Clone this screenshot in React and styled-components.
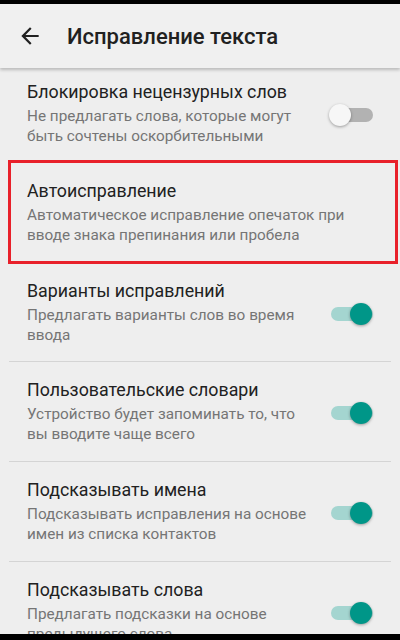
import React from 'react';
import styled, { createGlobalStyle } from 'styled-components';

const GlobalStyle = createGlobalStyle`
  html, body {
    margin: 0;
    padding: 0;
    background: #000;
  }
  * {
    box-sizing: border-box;
  }
`;

const Screen = styled.div`
  width: 400px;
  height: 640px;
  display: flex;
  flex-direction: column;
  background: #eeeeee;
  font-family: Roboto, "Noto Sans", sans-serif;
  overflow: hidden;
`;

const StatusStrip = styled.div`
  height: ${(p) => p.h}px;
  flex: none;
  background: #000;
`;

const Toolbar = styled.header`
  height: 64px;
  flex: none;
  display: flex;
  align-items: center;
  padding-left: 17px;
  background: #f0f0f0;
  box-shadow: 0 2px 3px rgba(0, 0, 0, 0.22);
  position: relative;
  z-index: 1;
`;

const BackIcon = styled.svg`
  width: 26px;
  height: 26px;
  fill: #212121;
  margin-right: 24px;
`;

const Title = styled.h1`
  margin: 0;
  font-size: 22px;
  font-weight: 500;
  color: #212121;
`;

const List = styled.div`
  flex: 1;
  overflow: hidden;
  padding: 0 9px;
`;

const Row = styled.div`
  height: ${(p) => p.h}px;
  display: flex;
  align-items: center;
  padding-left: 18px;
  padding-right: 18px;
  border-bottom: 1px solid ${(p) => (p.divider ? '#d4d4d4' : 'transparent')};
  ${(p) =>
    p.highlighted &&
    `
    border: 3px solid #e8202a;
    margin: 0 -7px 0 -1px;
    padding-left: 16px;
  `}
`;

const TextBlock = styled.div`
  flex: 1;
  min-width: 0;
`;

const ItemTitle = styled.div`
  font-size: 17.8px;
  line-height: 22px;
  color: #212121;
  margin-bottom: 3px;
`;

const ItemSub = styled.div`
  font-size: 15.3px;
  line-height: 20px;
  color: #757575;
  white-space: nowrap;
`;

const Switch = styled.div`
  position: relative;
  width: 44px;
  height: 24px;
  flex: none;
  margin-left: 16px;
  margin-top: 2px;
`;

const Track = styled.div`
  position: absolute;
  left: 2px;
  right: 0;
  top: 5px;
  height: 14px;
  border-radius: 7px;
  background: ${(p) => (p.on ? '#a4d5d0' : '#b2b2b2')};
`;

const Thumb = styled.div`
  position: absolute;
  top: 1px;
  left: ${(p) => (p.on ? '21px' : '0')};
  width: 22px;
  height: 22px;
  border-radius: 50%;
  background: ${(p) => (p.on ? '#009688' : '#f7f7f7')};
  box-shadow: 0 1px 3px rgba(0, 0, 0, 0.35);
`;

const Toggle = ({ on }) => (
  <Switch>
    <Track on={on} />
    <Thumb on={on} />
  </Switch>
);

const items = [
  {
    title: 'Блокировка нецензурных слов',
    sub: ['Не предлагать слова, которые могут', 'быть сочтены оскорбительными'],
    toggle: 'off',
    h: 92,
  },
  {
    title: 'Автоисправление',
    sub: ['Автоматическое исправление опечаток при', 'вводе знака препинания или пробела'],
    highlighted: true,
    h: 104,
  },
  {
    title: 'Варианты исправлений',
    sub: ['Предлагать варианты слов во время', 'ввода'],
    toggle: 'on',
    divider: true,
    h: 98,
  },
  {
    title: 'Пользовательские словари',
    sub: ['Устройство будет запоминать то, что', 'вы вводите чаще всего'],
    toggle: 'on',
    divider: true,
    h: 100,
  },
  {
    title: 'Подсказывать имена',
    sub: ['Подсказывать исправления на основе', 'имен из списка контактов'],
    toggle: 'on',
    divider: true,
    h: 100,
  },
  {
    title: 'Подсказывать слова',
    sub: ['Предлагать подсказки на основе', 'предыдущего слова'],
    toggle: 'on',
    h: 100,
  },
];

const App = () => {
  return (
    <>
      <GlobalStyle />
      <Screen>
        <StatusStrip h={4} />
        <Toolbar>
          <BackIcon viewBox="0 0 24 24">
            <path d="M20 11H7.83l5.59-5.59L12 4l-8 8 8 8 1.41-1.41L7.83 13H20v-2z" />
          </BackIcon>
          <Title>Исправление текста</Title>
        </Toolbar>
        <List>
          {items.map((it) => (
            <Row key={it.title} h={it.h} divider={it.divider} highlighted={it.highlighted}>
              <TextBlock>
                <ItemTitle>{it.title}</ItemTitle>
                {it.sub.map((line) => (
                  <ItemSub key={line}>{line}</ItemSub>
                ))}
              </TextBlock>
              {it.toggle && <Toggle on={it.toggle === 'on'} />}
            </Row>
          ))}
        </List>
        <StatusStrip h={6} />
      </Screen>
    </>
  );
};

export default App;
